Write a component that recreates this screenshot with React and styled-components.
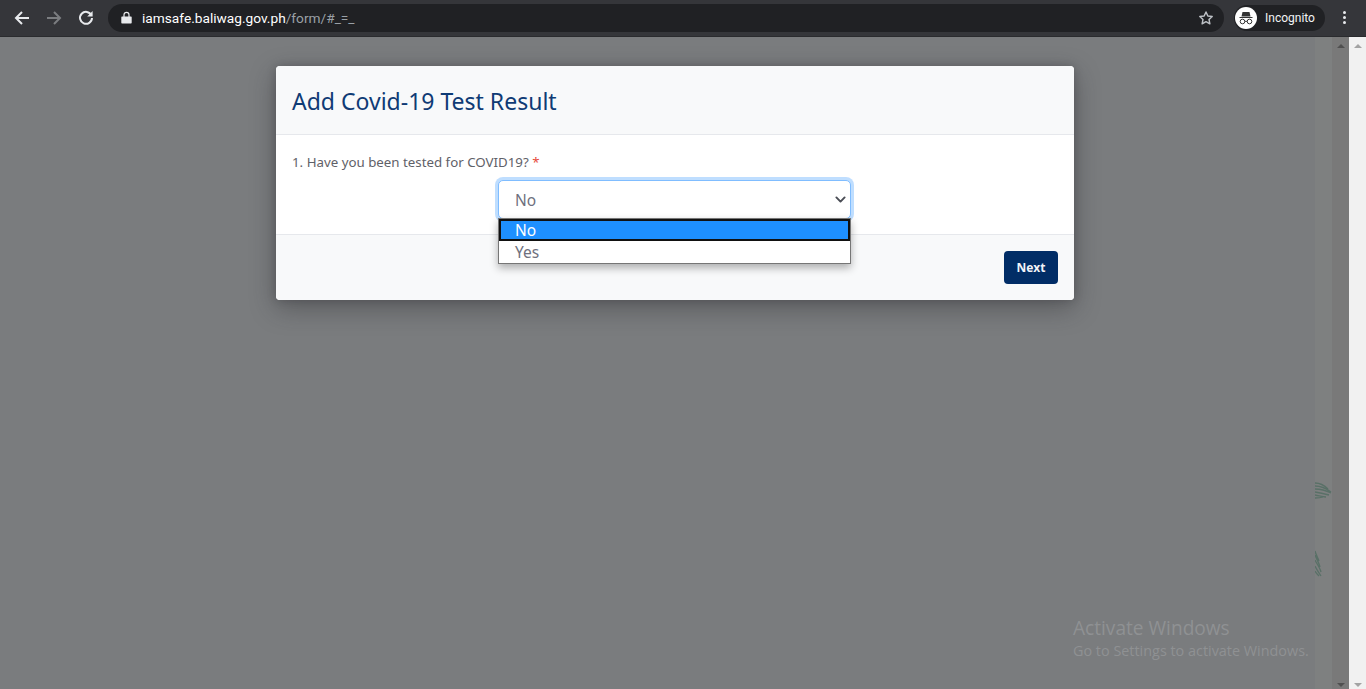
import React from "react";
import styled, { createGlobalStyle } from "styled-components";

const Global = createGlobalStyle`
  html, body { margin: 0; padding: 0; height: 100%; overflow: hidden; background: #7a7c7e; }
  #root { height: 100%; }
  * { box-sizing: border-box; }
`;
const Page = styled.div`
  width: 1366px; height: 689px; display: flex; flex-direction: column;
  font-family: "Noto Sans", "Open Sans", sans-serif;
`;
const Toolbar = styled.header`
  height: 37px; flex: none; background: #35363a; border-bottom: 1px solid #2a2b2e;
  display: flex; align-items: center; padding: 0 0 1px 0; position: relative;
`;
const NavButton = styled.span`
  width: 32px; height: 32px; display: flex; align-items: center; justify-content: center; flex: none;
`;
const NavGroup = styled.div`
  display: flex; align-items: center; padding-left: 6px; width: 108px; flex: none;
`;
const Omnibox = styled.div`
  width: 1116px; height: 28px; border-radius: 14px; background: #202124; flex: none;
  display: flex; align-items: center; padding: 0 10px 0 13px;
`;
const Url = styled.div`
  flex: 1; margin-left: 10px; font: 13.7px/16px "Roboto", "Noto Sans", sans-serif; color: #9aa0a6; white-space: nowrap;
  b { font-weight: 400; color: #fff; }
`;
const Profile = styled.div`
  margin-left: 10px; width: 91px; height: 26px; border-radius: 13px; background: #202124; flex: none;
  display: flex; align-items: center; gap: 8px; padding-left: 1px;
  font: 12px/14px "Roboto", sans-serif; color: #f1f3f4;
`;
const ProfileAvatar = styled.span`
  width: 22px; height: 22px; border-radius: 50%; background: #fff; display: flex; align-items: center; justify-content: center;
`;
const Kebab = styled.span`
  margin-left: 18px; display: flex; flex-direction: column; gap: 2px;
  i { display: block; width: 3px; height: 3px; border-radius: 50%; background: #e8eaed; }
`;
const Body = styled.div`
  flex: 1; display: flex; min-height: 0; position: relative;
`;
const Content = styled.main`
  flex: none; width: 1315px; background: #7a7c7e; padding: 29px 0 0 276px; position: relative;
`;
const Modal = styled.section`
  width: 798px; height: 234px; border-radius: 4px; background: #fff; display: flex; flex-direction: column;
  box-shadow: 0 8px 26px rgba(40,40,45,.42), 0 0 8px rgba(40,40,45,.25);
  position: relative;
`;
const ModalHeader = styled.div`
  height: 69px; flex: none; background: #f8f9fa; border-bottom: 1px solid #e6e8ec; border-radius: 4px 4px 0 0;
  padding: 2px 16px 0; display: flex; align-items: center;
`;
const Title = styled.h1`
  margin: 0; font-size: 23px; line-height: 30px; font-weight: 400; color: #0f3b75;
`;
const ModalBody = styled.div`
  height: 99px; flex: none; padding: 19px 16px 0; position: relative;
`;
const Question = styled.div`
  font-size: 13.3px; line-height: 17px; color: #5f6168;
  em { font-style: normal; color: #e74a3b; }
`;
const SelectBox = styled.div`
  margin: 9px 0 0 206px; width: 353px; height: 39px; border: 1px solid #80bdff; border-radius: 5px; background: #fff;
  box-shadow: 0 0 0 3px rgba(0,123,255,.25);
  display: flex; align-items: center; justify-content: space-between; padding: 0 4px 0 16px;
  font-size: 15.5px; color: #6e707e; position: relative;
`;
const Dropdown = styled.ul`
  position: absolute; left: -1px; top: 37px; margin: 0; padding: 0; list-style: none; width: 353px; height: 46px;
  background: #fff; border: 1px solid #767676; box-shadow: 0 4px 8px rgba(0,0,0,.3); z-index: 2;
  font-size: 15.5px;
`;
const Option = styled.li`
  height: 22px; line-height: 22px; padding-left: 16px;
  color: ${p => (p.$active ? "#fff" : "#6e707e")};
  background: ${p => (p.$active ? "#1e90ff" : "#fff")};
  ${p => p.$active && "border: 2px solid #111; padding-left: 14px; line-height: 18px;"}
`;
const ModalFooter = styled.div`
  flex: 1; background: #f8f9fa; border-top: 1px solid #e6e8ec; border-radius: 0 0 4px 4px;
  display: flex; justify-content: flex-end; align-items: flex-start; padding: 16px 16px 0;
`;
const NextButton = styled.button`
  width: 54px; height: 33px; border: 0; border-radius: 4px; background: #012d66; color: #f1f3f8;
  font: 700 12px/16px "Noto Sans", sans-serif; padding: 1px 0 0;
`;
const Watermark = styled.div`
  position: absolute; left: 1073px; top: 579px; color: #8f9193; white-space: nowrap;
  font-family: "Open Sans", "Noto Sans", sans-serif; font-weight: 400;
  p { margin: 0; font-size: 14.4px; line-height: 20px; }
  h2 { margin: 0; font-size: 19.1px; line-height: 25px; font-weight: 400; }
`;
const Gutter = styled.aside`
  flex: none; width: 17px; background: #7e8080; position: relative;
`;
const Leaf = styled.svg`
  position: absolute; left: 0; opacity: .75;
`;
const Track = styled.div`
  flex: none; width: ${p => p.$w}px; background: ${p => p.$bg}; display: flex; flex-direction: column;
  align-items: center; justify-content: space-between; padding: 7px 0 2px;
`;
const Arrow = styled.span`
  width: 0; height: 0; border-left: 4px solid transparent; border-right: 4px solid transparent;
  ${p => (p.$down ? `border-top: 4px solid ${p.$c};` : `border-bottom: 4px solid ${p.$c};`)}
`;

const Chevron = () => (
  <svg width="11" height="11" viewBox="0 0 16 16" fill="none" stroke="#4a4d55" strokeWidth="2.800" strokeLinecap="round" strokeLinejoin="round">
    <path d="M2 5l6 6 6-6" />
  </svg>
);

export default function App() {
  return (
    <Page>
      <Global />
      <Toolbar>
        <NavGroup>
          <NavButton>
            <svg width="16" height="16" viewBox="0 0 16 16" fill="none" stroke="#e8eaed" strokeWidth="2"><path d="M15 8H2M8 2L2 8l6 6" /></svg>
          </NavButton>
          <NavButton>
            <svg width="16" height="16" viewBox="0 0 16 16" fill="none" stroke="#7b7d80" strokeWidth="2"><path d="M1 8h13M8 2l6 6-6 6" /></svg>
          </NavButton>
          <NavButton>
            <svg width="16" height="16" viewBox="0 0 16 16" fill="none" stroke="#e8eaed" strokeWidth="2"><path d="M13.4 5.200A6 6 0 1 0 14 8" /><path d="M14.600 1v5.400H9.200z" fill="#e8eaed" stroke="none" /></svg>
          </NavButton>
        </NavGroup>
        <Omnibox>
          <svg width="11" height="13" viewBox="0 0 11 13"><path d="M1 5.500h9a.7.7 0 0 1 .7.7v5.600a.7.7 0 0 1-.7.7H1a.7.7 0 0 1-.7-.7V6.200a.7.7 0 0 1 .7-.7z" fill="#e8eaed" /><path d="M3 6V3.800a2.500 2.500 0 0 1 5 0V6" fill="none" stroke="#e8eaed" strokeWidth="1.200" /></svg>
          <Url><b>iamsafe.baliwag.gov.ph</b>/form/#_=_</Url>
          <svg width="16" height="16" viewBox="0 0 24 24" fill="none" stroke="#bdc1c6" strokeWidth="2.200" strokeLinejoin="round"><path d="M12 3l2.800 6 6.500.8-4.800 4.400 1.300 6.500L12 17.500l-5.800 3.200 1.300-6.500L2.700 9.800 9.200 9z" /></svg>
        </Omnibox>
        <Profile>
          <ProfileAvatar>
            <svg width="18" height="18" viewBox="0 0 18 18" fill="none"><path d="M2.500 8h13v1h-13zM5.500 3h7l1 4.500h-9z" fill="#333" /><circle cx="5.500" cy="12.500" r="2.300" stroke="#333" /><circle cx="12.500" cy="12.500" r="2.300" stroke="#333" /><path d="M7.800 12.300h2.400" stroke="#333" /></svg>
          </ProfileAvatar>
          Incognito
        </Profile>
        <Kebab><i /><i /><i /></Kebab>
      </Toolbar>
      <Body>
        <Content>
          <Modal>
            <ModalHeader><Title>Add Covid-19 Test Result</Title></ModalHeader>
            <ModalBody>
              <Question>1. Have you been tested for COVID19? <em>*</em></Question>
              <SelectBox>
                No
                <Chevron />
                <Dropdown>
                  <Option $active>No</Option>
                  <Option>Yes</Option>
                </Dropdown>
              </SelectBox>
            </ModalBody>
            <ModalFooter><NextButton>Next</NextButton></ModalFooter>
          </Modal>
        </Content>
        <Gutter>
          <Leaf style={{ top: 445 }} width="17" height="20" viewBox="0 0 17 20" fill="none" stroke="#4d6b5f" strokeWidth="1.300">
            <path d="M0 1c6 0 10 3 13 6M0 4c6 0 12 3 16 6M0 7c6 0 12 2 16 4M0 10c6 1 10 2 14 3M0 13c5 1 8 2 11 2M0 16c3 0 5 0 8-1" />
          </Leaf>
          <Leaf style={{ top: 511 }} width="8" height="30" viewBox="0 0 8 30" fill="none" stroke="#4d6b5f" strokeWidth="1.300">
            <path d="M0 3c1 4 3 7 4 10M0 7c2 5 4 8 5 12M0 12c2 4 5 8 6 12M0 18c2 4 4 7 6 10M0 23c1 2 3 4 4 5" />
          </Leaf>
        </Gutter>
        <Track $w={17} $bg="#797979"><Arrow $c="#505050" /><Arrow $down $c="#505050" /></Track>
        <Track $w={17} $bg="#f1f1f1"><Arrow $c="#a3a3a3" /><Arrow $down $c="#a3a3a3" /></Track>
        <Watermark>
          <h2>Activate Windows</h2>
          <p>Go to Settings to activate Windows.</p>
        </Watermark>
      </Body>
    </Page>
  );
}
